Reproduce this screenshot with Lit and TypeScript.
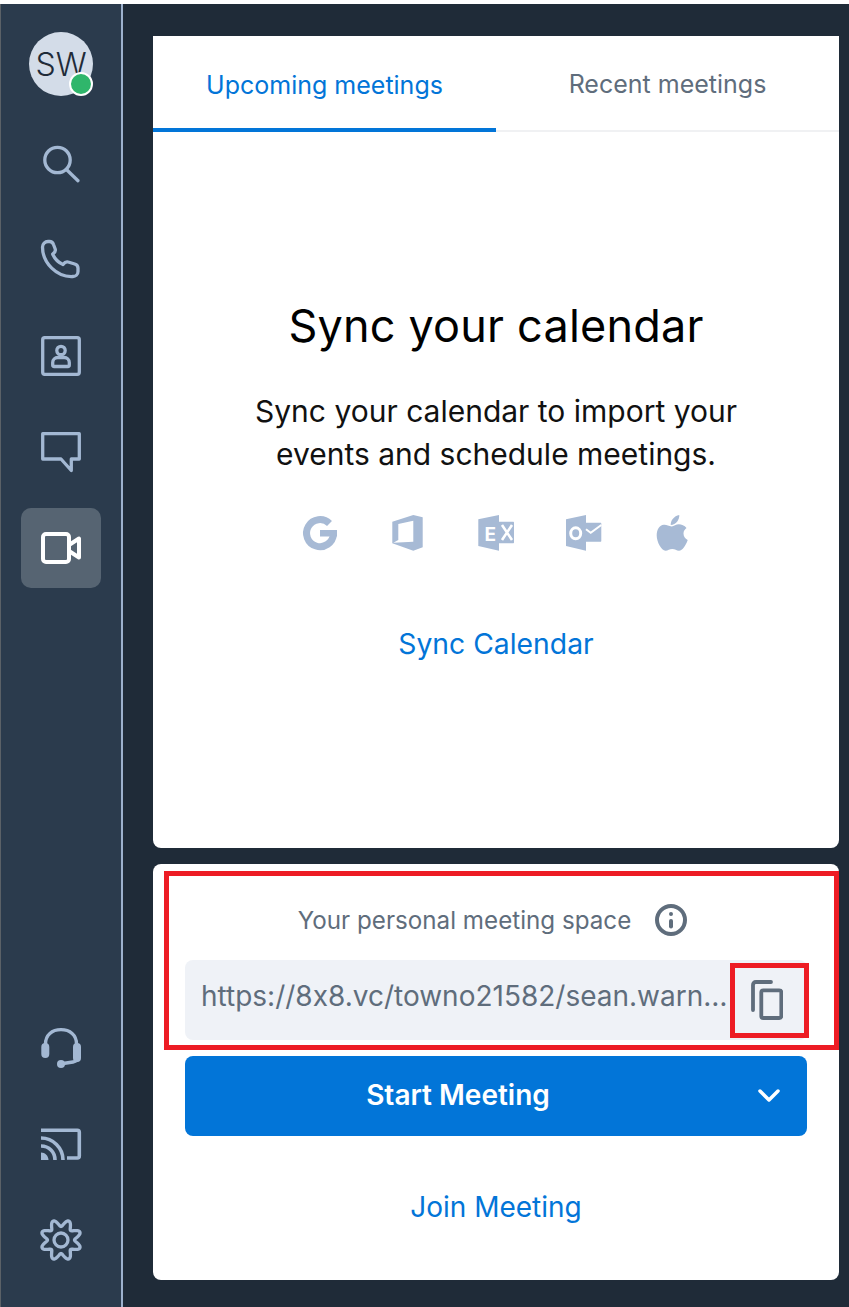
import { LitElement, html, css, svg } from "lit";
import { customElement } from "lit/decorators.js";

const gearPath = () => {
  const pts: string[] = [];
  for (let i = 0; i < 160; i++) {
    const a = (i / 160) * Math.PI * 2;
    const r = 17 + 3.5 * Math.cos(8 * a - Math.PI);
    pts.push(`${(20 + r * Math.cos(a)).toFixed(2)} ${(20 + r * Math.sin(a)).toFixed(2)}`);
  }
  return `M${pts.join("L")}Z`;
};

const navIcons = {
  search: svg`<circle cx="16.500" cy="16" r="12.700"/><path d="M25.700 25.700 37 36.700"/>`,
  phone: svg`<path d="M1.500 7c0-3 2.500-5.500 5.500-5.500h1.500c2 0 3.300 1 4 3l1.700 4.500c.7 2-.2 3.500-2.500 5.200 2.300 5 5.500 8.200 10.300 10.300 1.700-2.300 3.200-3.200 5.200-2.500l6.500 2c2.300.7 3.300 2 3.300 4v3.500c0 3-2.500 5-5 5C16 37.500 1.500 23 1.500 7z"/>`,
  contact: svg`<rect x="1.700" y="1.700" width="36.600" height="36.600" rx="2"/><circle cx="20" cy="14.500" r="4.200"/><path d="M11.700 29v-2.500c0-3 2.500-5 5-5h6.600c2.500 0 5 2 5 5V29c0 1-.5 1.500-1.500 1.500H13.200c-1 0-1.500-.5-1.500-1.500z"/>`,
  chat: svg`<path d="M1.700 1.700h36.600v25.300h-8v11.500L20 27H1.700z"/>`,
  video: svg`<rect x="2" y="6" width="26" height="28" rx="3"/><path d="M28 17l10-6.500v19L28 23"/>`,
  headset: svg`<path d="M4.500 16C4.500 7 11 1.700 20 1.700S35.500 7 35.500 16"/><path d="M22 35.500 32 34c3-.5 5-1.500 5.500-4"/><rect class="fill" x="0.300" y="15" width="8" height="15" rx="4"/><rect class="fill" x="32" y="15" width="8" height="19" rx="4"/><circle class="fill" cx="20" cy="36" r="4"/>`,
  cast: svg`<path class="butt" d="M0 6.300h36.300c1.300 0 2 .7 2 2V32c0 1.300-.7 2-2 2H26"/><path class="butt" d="M0 14c12 0 22 10 22 22M0 22c8 0 14 6 14 14"/><path class="fill" d="M0 28.500c4 0 7.500 3.500 7.500 7.500H0z"/>`,
  gear: svg`<path d=${gearPath()}/><circle cx="20" cy="20" r="7"/>`,
};

const nav = (name: keyof typeof navIcons, active = false) => html`
  <div class="item ${active ? "active" : ""}">
    <svg viewBox="0 0 40 40" width="40" height="40">${navIcons[name]}</svg>
  </div>
`;

const logos = [
  svg`<path d="M29.500 10.500A13.500 13.500 0 1 0 33.500 21" fill="none" stroke-width="7"/><rect x="20" y="17" width="17" height="6.500"/>`,
  svg`<path fill-rule="evenodd" d="M4.300 8.700 25.300 2l9.400 2.300v30l-9.400 3.400-21-7.400zM10.300 11v16l-5 2.700 20-1V7.700z"/>`,
  svg`<path d="M2.300 6.300 23 2v35.700L2.300 33zM23 8.700h14c.7 0 1 .3 1 1v19.600c0 .7-.3 1-1 1H23z"/><text x="8.500" y="27.700" class="glyph">E</text><path class="cut wide" d="M26 12l10 15M36 12 26 27"/>`,
  svg`<path d="M2 6.300 22 2v35.700L2 33zM22 9.700h14.300c.7 0 1 .3 1 1v17c0 .7-.3 1-1 1H22z"/><ellipse class="cut thick" cx="11.700" cy="20.300" rx="5" ry="5.500"/><path class="cut" d="M22 16.300l4.700 3.400L37.300 12"/>`,
  svg`<path d="M19.700 13.500C16.500 13 14.500 11.500 11.800 11.800 7.500 12.200 4.700 16.500 4.700 22.500 4.700 29 9.500 37.700 13.500 37.700 16 37.700 17.500 36 20.300 36 23 36 24.500 37.700 27 37.700 30.500 37.700 34 32 35.700 27 33 25.500 31.500 23.500 31.500 20.500 31.500 18 32.500 16.500 34.500 15 32.500 12.500 29.500 11.300 26.800 11.300 24 11.300 22 13 19.700 13.500Z"/><path d="M18.700 12C18.500 7.500 22 3 27.300 2 27.500 7 24 11.500 18.700 12Z"/>`,
];

@customElement("app-root")
export class AppRoot extends LitElement {
  static styles = css`
    :host {
      display: block;
      width: 849px;
      height: 1307px;
      font-family: Inter, "Noto Sans", sans-serif;
      font-variant-ligatures: none;
      font-feature-settings: "calt" 0;
      position: relative;
      overflow: hidden;
      background: #fff;
    }

    .shell {
      display: flex;
      height: 1303px;
      margin-top: 4px;
      background: #1f2b38;
    }

    .side {
      width: 120px;
      flex: none;
      display: flex;
      flex-direction: column;
      align-items: center;
      gap: 16px;
      padding: 20px 0 27px;
      background: #2b3b4d;
      border-left: 1px solid #5b6167;
      border-right: 2px solid #9db1cd;
    }

    .spacer {
      flex: 1;
    }

    .item {
      width: 80px;
      height: 80px;
      border-radius: 10px;
      display: flex;
      align-items: center;
      justify-content: center;
      flex: none;
    }

    .item.me {
      height: 84px;
      box-sizing: border-box;
      padding-top: 8px;
      align-items: flex-start;
    }

    .item svg {
      overflow: visible;
      fill: none;
      stroke: #a3b8d3;
      stroke-width: 3.3;
      stroke-linecap: round;
      stroke-linejoin: round;
    }

    .item svg .fill {
      fill: #a3b8d3;
      stroke: none;
    }

    .item svg .butt {
      stroke-linecap: butt;
      stroke-width: 3.6;
    }

    .item.active {
      background: #566472;
    }

    .item.active svg {
      stroke: #fff;
      stroke-width: 4;
    }

    .avatar {
      width: 64px;
      height: 64px;
      border-radius: 50%;
      background: #d3dce8;
      color: #1f2b38;
      font-size: 32px;
      font-weight: 300;
      display: flex;
      align-items: center;
      justify-content: center;
      position: relative;
    }

    .presence {
      position: absolute;
      right: 0;
      bottom: 0;
      width: 24px;
      height: 24px;
      box-sizing: border-box;
      border-radius: 50%;
      background: #2fb66b;
      border: 2px solid #fff;
    }

    .main {
      flex: 1;
      min-width: 0;
      display: flex;
      flex-direction: column;
      gap: 16px;
      padding: 32px 10px 27px 30px;
    }

    .card {
      background: #fff;
      border-radius: 8px;
    }

    .upper {
      flex: 1;
      border-radius: 0 0 8px 8px;
      display: flex;
      flex-direction: column;
    }

    .tabs {
      display: flex;
      height: 96px;
      flex: none;
      box-sizing: border-box;
      border-bottom: 2px solid #f0f1f3;
    }

    .tab {
      flex: 1;
      display: flex;
      align-items: center;
      justify-content: center;
      font-size: 25px;
      color: #5f6d7c;
      padding-top: 2px;
    }

    .tab.on {
      color: #0275d8;
      border-bottom: 4px solid #0275d8;
      margin-bottom: -2px;
      padding-top: 5px;
    }

    .sync {
      flex: 1;
      display: flex;
      flex-direction: column;
      align-items: center;
      text-align: center;
      padding-top: 166px;
    }

    h1 {
      margin: 0;
      font-size: 45px;
      letter-spacing: 0.2px;
      line-height: 56px;
      font-weight: 400;
      color: #000;
    }

    .sync p {
      margin: 36px 0 0;
      font-size: 30px;
      line-height: 43px;
      color: #111;
    }

    .logos {
      display: flex;
      gap: 48px;
      margin-top: 37px;
    }

    .logos svg {
      width: 40px;
      height: 40px;
      fill: #a7bad5;
      stroke: #a7bad5;
      stroke-width: 0;
    }

    .logos .cut {
      fill: none;
      stroke: #fff;
      stroke-width: 2;
    }

    .logos .cut.wide {
      stroke-width: 2.6;
    }

    .logos .cut.thick {
      stroke-width: 3;
    }

    .logos .glyph {
      fill: #fff;
      font: 700 19px Inter, sans-serif;
    }

    .link {
      color: #0275d8;
      font-size: 28px;
      line-height: 36px;
    }

    .sync .link {
      margin-top: 73px;
      font-size: 28.3px;
    }

    .lower {
      height: 416px;
      flex: none;
      min-width: 0;
      padding: 36px 32px 0;
      box-sizing: border-box;
      display: flex;
      flex-direction: column;
    }

    .label {
      display: flex;
      align-items: center;
      justify-content: center;
      gap: 24px;
      height: 40px;
      font-size: 24.2px;
      color: #5f6d7c;
      margin-right: 7px;
    }

    .label svg {
      width: 32px;
      height: 32px;
    }

    .url {
      margin-top: 20px;
      height: 80px;
      background: #eff2f7;
      border-radius: 8px;
      display: flex;
      align-items: center;
      padding-left: 16px;
      color: #5f6d7c;
      font-size: 28px;
    }

    .url span {
      flex: 1;
      min-width: 0;
      overflow: hidden;
      white-space: nowrap;
      text-overflow: ellipsis;
      padding-bottom: 8px;
    }

    .copy {
      width: 78px;
      flex: none;
      box-sizing: border-box;
      padding-right: 2px;
      display: flex;
      justify-content: center;
    }

    .start {
      margin-top: 16px;
      height: 80px;
      box-sizing: border-box;
      padding-bottom: 2px;
      background: #0275d8;
      color: #fff;
      border-radius: 8px;
      display: flex;
      align-items: center;
      font-size: 28px;
      font-weight: 600;
    }

    .start span {
      flex: 1;
      text-align: center;
    }

    .start div {
      width: 76px;
      display: flex;
      justify-content: center;
    }

    .lower .link {
      text-align: center;
      margin-top: 53px;
    }

    .mark {
      position: absolute;
      box-sizing: border-box;
      border: 5px solid #ed1c24;
      pointer-events: none;
    }

    .mark.outer {
      left: 164px;
      top: 871px;
      width: 675px;
      height: 179px;
    }

    .mark.inner {
      left: 730px;
      top: 963px;
      width: 79px;
      height: 75px;
    }
  `;

  render() {
    return html`
      <div class="shell">
        <nav class="side">
          <div class="item me">
            <div class="avatar">SW<i class="presence"></i></div>
          </div>
          ${nav("search")} ${nav("phone")} ${nav("contact")} ${nav("chat")}
          ${nav("video", true)}
          <div class="spacer"></div>
          ${nav("headset")} ${nav("cast")} ${nav("gear")}
        </nav>
        <main class="main">
          <section class="card upper">
            <div class="tabs">
              <div class="tab on">Upcoming meetings</div>
              <div class="tab">Recent meetings</div>
            </div>
            <div class="sync">
              <h1>Sync your calendar</h1>
              <p>Sync your calendar to import your<br />events and schedule meetings.</p>
              <div class="logos">
                ${logos.map((l) => html`<svg viewBox="0 0 40 40">${l}</svg>`)}
              </div>
              <div class="link">Sync Calendar</div>
            </div>
          </section>
          <section class="card lower">
            <div class="label">
              <span>Your personal meeting space</span>
              <svg viewBox="0 0 32 32" fill="none" stroke="#5f6d7c" stroke-width="4" stroke-linecap="round">
                <circle cx="16" cy="16" r="14" />
                <path d="M16 17v5.500" />
                <circle cx="16" cy="10" r="1" fill="#5f6d7c" stroke-width="2" />
              </svg>
            </div>
            <div class="url">
              <span>https://8x8.vc/towno21582/sean.warner</span>
              <div class="copy">
                <svg viewBox="0 0 32 40" width="32" height="40" fill="none" stroke="#5f6d7c" stroke-width="3.800" stroke-linejoin="round" stroke-linecap="round">
                  <rect x="10.300" y="10.300" width="20" height="27.700" rx="2" />
                  <path d="M2 30V5c0-2 1-3 3-3h15" />
                </svg>
              </div>
            </div>
            <div class="start">
              <span>Start Meeting</span>
              <div>
                <svg viewBox="0 0 24 14" width="24" height="14" fill="none" stroke="#fff" stroke-width="3.500" stroke-linecap="round" stroke-linejoin="round">
                  <path d="M3 3l9 9 9-9" />
                </svg>
              </div>
            </div>
            <div class="link">Join Meeting</div>
          </section>
        </main>
      </div>
      <div class="mark outer"></div>
      <div class="mark inner"></div>
    `;
  }
}

declare global {
  interface HTMLElementTagNameMap {
    "app-root": AppRoot;
  }
}
